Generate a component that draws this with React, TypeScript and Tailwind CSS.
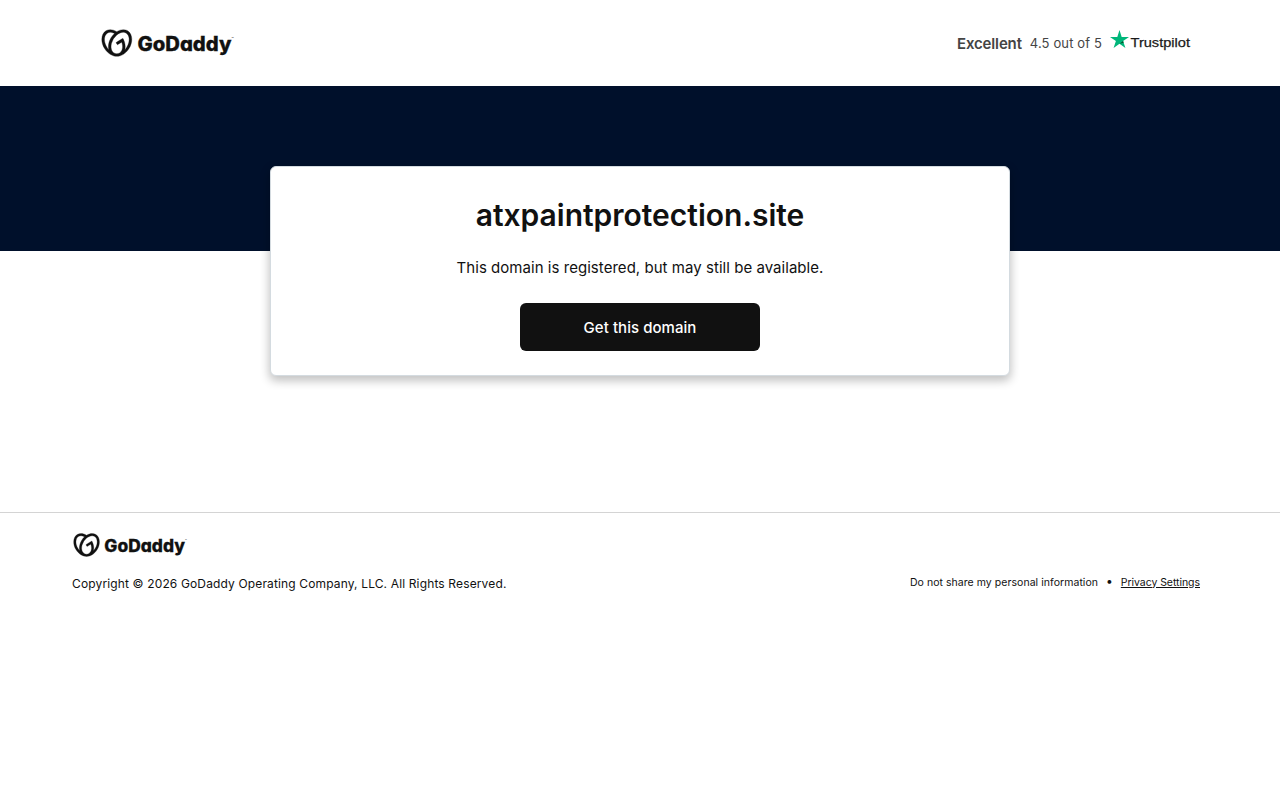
import { SiGodaddy } from "react-icons/si";

function GoDaddyLogo({ className }: { className: string }) {
  return (
    <svg viewBox="0 0 134 30" className={className} role="img" aria-label="GoDaddy">
      <SiGodaddy x={0.8} y={0} size={30} fill="#111111" stroke="#111111" strokeWidth={0.25} overflow="visible" />
      <text
        x="36.5"
        y="23"
        fontSize="19.6"
        fontWeight="800"
        textLength="94"
        lengthAdjust="spacingAndGlyphs"
        fill="#111111"
        stroke="#111111"
        strokeWidth="0.3"
        className="font-['Inter',sans-serif] [font-feature-settings:'cv11']"
      >
        GoDaddy
      </text>
      <text x="130.5" y="11.5" fontSize="3.5" fill="#111111" className="font-['Inter',sans-serif]">
        ™
      </text>
    </svg>
  );
}

function TrustpilotLogo() {
  return (
    <svg viewBox="0 0 81 22" className="h-[22px] w-[81px]" role="img" aria-label="Trustpilot">
      <path
        d="M9.500 1l2.200 6.900h7.300l-5.900 4.200 2.300 6.900-5.900-4.300L3.600 19l2.300-6.900L0 7.900h7.300z"
        fill="#00b67a"
      />
      <path d="M13.600 13.700l-.5-1.600-3.600 2.600z" fill="#005128" />
      <text
        x="20.500"
        y="18"
        fontSize="13.5"
        textLength="59.500"
        lengthAdjust="spacingAndGlyphs"
        fill="#191919"
        stroke="#191919"
        strokeWidth="0.25"
        className="font-['Liberation_Sans',sans-serif]"
      >
        Trustpilot
      </text>
    </svg>
  );
}

export default function App() {
  return (
    <div className="min-h-screen bg-white font-['Inter',sans-serif] text-[#111111]">
      <header className="flex h-[86px] items-center justify-between pr-[89px] pl-[101px]">
        <GoDaddyLogo className="h-[30px] w-[134px]" />
        <div className="flex items-center text-[#444444]">
          <span className="pt-0.5 text-[15px] leading-6 font-semibold tracking-[-0.01em]">Excellent</span>
          <span className="ml-2 text-[13px] leading-6 tracking-[0.01em]">4.5 out of 5</span>
          <span className="mb-[7px] ml-2">
            <TrustpilotLogo />
          </span>
        </div>
      </header>

      <main className="h-[426px]">
        <section className="h-[165px] bg-[#00102b] pt-20">
          <div className="mx-auto flex h-[210px] w-[740px] flex-col items-center rounded-md border border-[#d4dbe0] bg-white pt-7 shadow-[0_4px_10px_1px_rgba(0,0,0,0.24)]">
            <h1 className="text-[30px] leading-10 font-semibold">atxpaintprotection.site</h1>
            <p className="mt-[21px] text-[15px] leading-6 tracking-[0.04px]">
              This domain is registered, but may still be available.
            </p>
            <button className="mt-[23px] h-12 w-60 rounded-md bg-[#111111] pt-0.5 text-[15px] font-medium tracking-[0.05px] text-white">
              Get this domain
            </button>
          </div>
        </section>
      </main>

      <footer className="border-t border-[#d4d4d4] pt-[19px] pr-20 pl-[72px]">
        <GoDaddyLogo className="ml-px h-[26px] w-[115px]" />
        <div className="mt-[15px] flex items-center justify-between">
          <p className="pt-px text-[12px] leading-5 tracking-[0.14px]">
            Copyright © 2026 GoDaddy Operating Company, LLC. All Rights Reserved.
          </p>
          <div className="flex items-center pb-0.5 text-[10.5px] leading-4">
            <span className="tracking-[0.05px]">Do not share my personal information</span>
            <span className="mx-2 -mt-1 text-[12px]">•</span>
            <a href="#" className="tracking-[-0.05px] underline">
              Privacy Settings
            </a>
          </div>
        </div>
      </footer>
    </div>
  );
}
